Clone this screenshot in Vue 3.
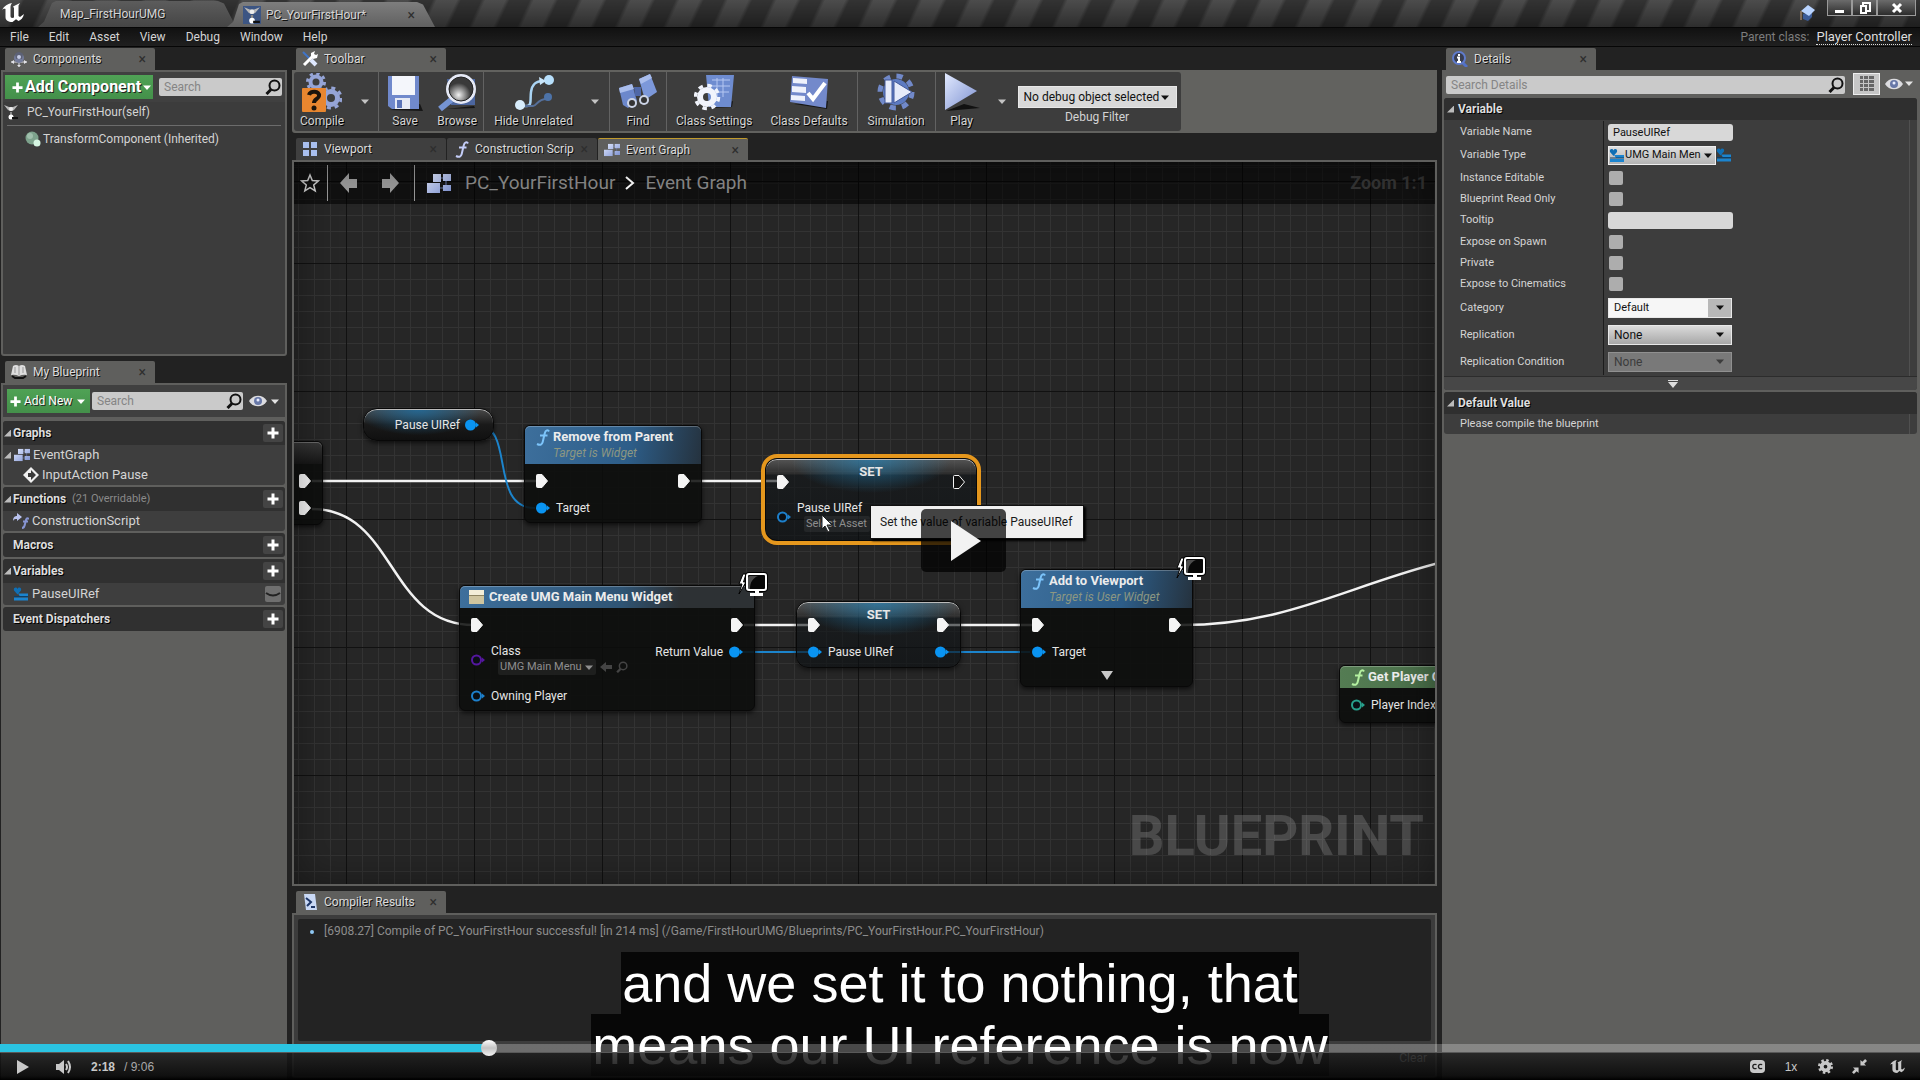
<template>
  <svg class="sprite" aria-hidden="true">
    <symbol id="caret" viewBox="0 0 8 5"><path d="M0 .5h8L4 5z" fill="currentColor" /></symbol>
    <symbol id="plus" viewBox="0 0 12 12"><path d="M4.500.5h3v4h4v3h-4v4h-3v-4h-4v-3h4z" fill="currentColor" /></symbol>
    <symbol id="search" viewBox="0 0 16 16">
      <circle cx="9.500" cy="6.500" r="5" fill="none" stroke="currentColor" stroke-width="2" />
      <path d="M6 10.500 1.500 15" stroke="currentColor" stroke-width="3" />
    </symbol>
    <symbol id="eye" viewBox="0 0 18 12">
      <path d="M0 6c4-7 14-7 18 0-4 7-14 7-18 0z" fill="#dcdce0" />
      <circle cx="9" cy="6" r="4" fill="#6878a8" /><circle cx="9" cy="5" r="1.500" fill="#e8ecff" />
    </symbol>
    <symbol id="graph" viewBox="0 0 24 19">
      <path d="M9 4h10M6 9v3M12 14h8M19 5v8" stroke="#6676a8" />
      <path d="M6 0h8v8H6zM16 0h8v7h-8zM0 9h13v10H0zM16 11h8v6h-8z" fill="url(#steel)" />
    </symbol>
    <symbol id="fn" viewBox="0 0 14 17">
      <path d="M13 2.500C12 .5 9.500.8 8.700 4.500L6.700 13C6 16 4 16.500 1 15M4 6.500h7.500" fill="none" stroke="currentColor" stroke-width="2" />
    </symbol>
    <symbol id="exec" viewBox="0 0 12 14">
      <path d="M1.500.5h4.500L11.500 7 6 13.500H1.500a1 1 0 0 1-1-1v-11a1 1 0 0 1 1-1z" fill="var(--fill, #f4f4f4)" stroke="#f4f4f4" />
    </symbol>
    <symbol id="pin" viewBox="0 0 14 12">
      <circle cx="5.500" cy="6" r="4.500" fill="var(--fill, currentColor)" stroke="currentColor" stroke-width="2" />
      <path d="M11 3.500 14 6l-3 2.500z" fill="currentColor" />
    </symbol>
    <symbol id="umg" viewBox="0 0 16 15">
      <path d="M5 7h10v3H7zM1 11h14v3H1z" fill="#1b84cf" /><path d="M1 9.500h14v1H1z" fill="#0a3f68" />
      <path d="M4.500 8 1 4c-1-3 2.500-4 3.500-1.500C5.500 0 9 1 8 4z" fill="#0f6fb5" />
    </symbol>
    <symbol id="pawn" viewBox="0 0 16 16">
      <path d="m1 1 5 2h4l5-2-4 5-2 1H7L5 6z" fill="#b9b9b9" /><circle cx="8" cy="5" r="2" fill="#eee" />
      <path d="M8 8v3" stroke="#888" stroke-width="2" /><circle cx="8" cy="13" r="2.500" fill="#fff" /><path d="M9 14h6" stroke="#111" stroke-width="2" />
    </symbol>
    <symbol id="monitor" viewBox="0 0 30 26">
      <path d="M5 2 1 12h3L1 22l7-12H5.500L8 2z" fill="#fff" stroke="#000" />
      <rect x="8" y="1" width="21" height="18" rx="3" fill="#080808" stroke="#000" stroke-width="2" />
      <path d="M12 17c0-7 3-11 8-13h-8q-2 0-2 2v11z" fill="#4c4c4c" />
      <rect x="9" y="2" width="19" height="16" rx="2" fill="none" stroke="#fff" stroke-width="2" />
      <path d="M17 19h4v2h4v3H12v-3h5z" fill="#fff" />
    </symbol>
    <symbol id="unreal" viewBox="0 0 22 19">
      <path d="M0 7C2 3 6 .8 10 0 8.800 1.500 8.500 3 8.500 4.500V13c0 2 1.500 2.500 3.500 1.500V5L11 3.500 18 0l-1.500 2.500V13l1.500 1 4-3c-1 4-3 6-5.500 7L14 16.200 10.500 19C6 19 3.500 17.500 3.500 14V6C2.500 5.300 1 6 0 7z" fill="currentColor" />
    </symbol>
    <defs>
      <linearGradient id="steel" x1="0" y1="0" x2="1" y2="1"><stop stop-color="#e2eaff" /><stop offset="1" stop-color="#7c90d0" /></linearGradient>
      <radialGradient id="glass" cx=".4" cy=".75"><stop stop-color="#f2f2f2" /><stop offset="1" stop-color="#3a3a3a" /></radialGradient>
    </defs>
  </svg>

  <main class="editor">
    <div class="titlebar">
      <svg class="logo" viewBox="0 0 22 19"><use href="#unreal" /></svg>
      <button class="app-tab">Map_FirstHourUMG</button>
      <button class="app-tab current">
        <svg class="tab-pawn"><use href="#pawn" /></svg>
        <span>PC_YourFirstHour*</span><i class="close">×</i>
      </button>
      <svg class="tutorial" viewBox="0 0 16 16">
        <path d="M4 9v5l5 2 4-4V7z" fill="#3c5c98" /><path d="m9 0 7 5-6 6-8-5z" fill="#b9d4ff" /><path d="M2 6v9" stroke="#c9a07a" />
      </svg>
      <div class="window-buttons">
        <button aria-label="Minimize"><svg viewBox="0 0 12 12"><path d="M1 9.500h9" stroke="#fff" stroke-width="3" /></svg></button>
        <button aria-label="Restore"><svg viewBox="0 0 12 12"><path d="M4 3V1h7v8H8M2 4h5v7H2z" fill="none" stroke="#fff" stroke-width="2" /></svg></button>
        <button class="wide" aria-label="Close"><svg viewBox="0 0 12 12"><path d="m2 2 8 8M10 2l-8 8" stroke="#fff" stroke-width="3" /></svg></button>
      </div>
    </div>

    <nav class="menubar">
      <button v-for="item in menu" :key="item">{{ item }}</button>
      <span class="parent-class">Parent class: <a href="#">Player Controller</a></span>
    </nav>

    <div class="columns">
      <aside class="left">
        <section class="dock components">
          <div class="tab">
            <svg class="icon16" viewBox="0 0 16 16"><path d="M0 11h16M8 10v6" stroke="#e4e4ea" /><path d="m0 11 3-2v4zM16 11l-3-2v4zM6 14h4l-2 2z" fill="#e4e4ea" /><circle cx="8" cy="7" r="5" fill="#757d9c" /><path d="M4 3q4-4 8 0l-1 5H5z" fill="#5c6176" /><circle cx="8" cy="6" r="2" fill="#c5cbe4" /></svg>
            <h2>Components</h2><button class="close" aria-label="Close">×</button>
          </div>
          <div class="panel bordered">
            <div class="bar">
              <button class="green large"><svg class="plus"><use href="#plus" /></svg>Add Component<svg class="caret"><use href="#caret" /></svg></button>
              <label class="search"><input v-model="componentSearch" placeholder="Search" aria-label="Search components" /><svg><use href="#search" /></svg></label>
            </div>
            <div class="self"><svg class="icon16"><use href="#pawn" /></svg>PC_YourFirstHour(self)</div>
            <div class="inherited">
              <svg class="icon16" viewBox="0 0 16 16"><circle cx="7" cy="7" r="6.500" fill="#7da28c" /><circle cx="5" cy="5" r="3" fill="#9fbfac" /><circle cx="12" cy="12" r="3.500" fill="#d5f5e2" /></svg>TransformComponent (Inherited)
            </div>
          </div>
        </section>

        <section class="dock blueprint">
          <div class="tab">
            <svg class="icon16" viewBox="0 0 16 16"><path d="M2 2q3-2 6 0 3-2 6 0l2 9q-4-1-8 1-4-2-8-1z" fill="#dedede" /><path d="M8 2v9M4 3v6M12 3v6" stroke="#999" /><path d="M1 12l3 2h8l3-2" fill="none" stroke="#111" stroke-width="2" /></svg>
            <h2>My Blueprint</h2><button class="close" aria-label="Close">×</button>
          </div>
          <div class="panel">
            <div class="bar">
              <button class="green"><svg class="plus"><use href="#plus" /></svg>Add New<svg class="caret"><use href="#caret" /></svg></button>
              <label class="search"><input v-model="blueprintSearch" placeholder="Search" aria-label="Search blueprint" /><svg><use href="#search" /></svg></label>
              <button class="view" aria-label="View options"><svg class="eye"><use href="#eye" /></svg><svg class="caret"><use href="#caret" /></svg></button>
            </div>
            <div v-for="group in groups" :key="group.title" class="group">
              <div class="group-head">
                <i class="fold" :class="{ none: !group.rows.length }"></i>
                <h3>{{ group.title }}</h3><small v-if="group.note">{{ group.note }}</small>
                <button :aria-label="'Add to ' + group.title"><svg class="plus"><use href="#plus" /></svg></button>
              </div>
              <div v-for="row in group.rows" :key="row.name" class="group-row" :class="row.kind">
                <i v-if="row.kind === 'graph'" class="fold"></i>
                <svg v-if="row.kind === 'graph'" class="icon16" viewBox="0 0 24 19"><use href="#graph" /></svg>
                <svg v-else-if="row.kind === 'event'" class="icon16" viewBox="0 0 16 16"><path d="m8 0 8 8-8 8-8-8z" fill="#f0f0f0" /><path d="m8 3 5 5-5 5v-3H5V6h3z" fill="#3a3a3a" /></svg>
                <svg v-else-if="row.kind === 'script'" class="icon16" viewBox="0 0 16 16"><path d="M0 8c0-4 2-5 4-5V0l5 4-5 4V6C2 6 1 6 0 8z" fill="#b9c2ee" /><path d="M16 6c-3-2-3 1-4 5-.5 3-1 4-3 4M10 8.500h5" fill="none" stroke="#8795d2" stroke-width="2" /></svg>
                <svg v-else class="icon16" viewBox="0 0 16 15"><use href="#umg" /></svg>
                <span>{{ row.name }}</span>
                <button v-if="row.kind === 'variable'" class="lid" aria-label="Toggle visibility"><svg viewBox="0 0 16 16"><path d="M1 7q7 5 14 0" fill="none" stroke="#222" stroke-width="2" /></svg></button>
              </div>
            </div>
          </div>
        </section>
      </aside>

      <section class="center">
        <div class="dock">
          <div class="tab">
            <svg class="icon16" viewBox="0 0 16 16"><path d="m1 1 8 8" stroke="#3f74c8" stroke-width="2" /><path d="m9 9 5 5" stroke="#dfe8ff" stroke-width="4" /><path d="M2 14 11 5" stroke="#fff" stroke-width="3" /><path d="M9 6V2l4-2-1 3 2 1 2-1-1 4-4 1z" fill="#fff" /></svg>
            <h2>Toolbar</h2><button class="close" aria-label="Close">×</button>
          </div>
          <div class="toolbar">
            <div class="tools">
              <div class="tool-group compile">
                <button class="tool">
                  <svg viewBox="0 0 40 40">
                    <g fill="none" stroke="#95a4d6"><circle cx="14" cy="9" r="5.500" stroke-width="4" /><circle cx="14" cy="9" r="8.500" stroke-width="3" stroke-dasharray="3.300 3.380" /><circle cx="29" cy="25" r="6.500" stroke-width="5" /><circle cx="29" cy="25" r="10" stroke-width="3" stroke-dasharray="4 3.850" /></g>
                    <rect y="15" width="24" height="24" rx="1" fill="#e8862f" />
                    <path d="M7 22c1-5 11-4 10 1-.5 3-5 3-5 7" fill="none" stroke="#1c140c" stroke-width="4" /><circle cx="12" cy="35" r="2.500" fill="#1c140c" />
                  </svg>Compile
                </button>
                <button class="drop" aria-label="Compile options"><svg class="caret"><use href="#caret" /></svg></button>
              </div>
              <div class="tool-group file">
                <button class="tool">
                  <svg viewBox="0 0 40 40"><path d="m4 37 34 1-3-7z" fill="#161616" /><path d="M3 3h31v33H7l-4-3z" fill="#7089cc" /><path d="M7 3h23v19H7z" fill="#f4f6fb" /><path d="M10 25h15v11H10z" fill="#e6eaf5" /><path d="M12 27h5v8h-5z" fill="#5b74b8" /></svg>Save
                </button>
                <button class="tool">
                  <svg viewBox="0 0 40 40"><path d="m9 36 28-3 1 2z" fill="#161616" /><path d="M10 6h28v26H14z" fill="#4c669f" /><path d="m14 27-11 9" stroke="#7594d4" stroke-width="6" /><circle cx="24" cy="16" r="15" fill="#e6eaf6" /><circle cx="24" cy="16" r="12" fill="url(#glass)" stroke="#222" /></svg>Browse
                </button>
              </div>
              <div class="tool-group hide">
                <button class="tool">
                  <svg viewBox="0 0 40 40"><path d="M6 33h7c5 0 3-7 4-14s4-11 12-11" fill="none" stroke="#a9d4f4" stroke-width="2.500" /><path d="M11 33h8c4 0 4-7 14-7" fill="none" stroke="#56709a" stroke-width="2" /><circle cx="6" cy="32" r="5" fill="#d7ecfb" /><circle cx="35" cy="7" r="5" fill="#b7dffb" /><circle cx="34" cy="24" r="4" fill="#4d73a8" /><path d="m25 4 7 4-6 4z" fill="#c8e5fa" /></svg>Hide Unrelated
                </button>
                <button class="drop" aria-label="Hide options"><svg class="caret"><use href="#caret" /></svg></button>
              </div>
              <div class="tool-group">
                <button class="tool">
                  <svg viewBox="0 0 40 40"><path d="m1 15 13-4 5 17-9 7-5-3z" fill="#6c88cc" /><path d="m21 6 11-5 7 18-12 8z" fill="#7c98da" /><path d="m1 15 13-4 2 5-14 4zM21 6l11-5 2 4-11 6z" fill="#a9bdec" /><path d="M16 14h7v9h-6z" fill="#4f68a8" /><circle cx="14" cy="30" r="5" fill="#ccd4e6" /><circle cx="26" cy="27" r="5" fill="#ccd4e6" /><circle cx="14" cy="30" r="3" fill="#333" /><circle cx="26" cy="27" r="3" fill="#333" /></svg>Find
                </button>
              </div>
              <div class="tool-group class-tools">
                <button class="tool">
                  <svg viewBox="0 0 40 40"><path d="m16 35 22-1 1-6z" fill="#161616" /><path d="M12 2h28l-3 32H15z" fill="#6e8cd0" /><path d="M18 7h18M17 13h19M16 19h19M23 5v19M29 5v19" stroke="#b5c7f2" /><circle cx="13" cy="24" r="7" fill="none" stroke="#f1f4fc" stroke-width="6" /><circle cx="13" cy="24" r="11.500" fill="none" stroke="#f1f4fc" stroke-width="3.500" stroke-dasharray="4.500 4.530" /></svg>Class Settings
                </button>
                <button class="tool">
                  <svg viewBox="0 0 40 40"><path d="m5 31 33 5 1-8z" fill="#161616" /><path d="m3 3 36 3-2 29L1 29z" fill="#7389cb" /><path d="m4 5 14 1v5L4 10zM3 13l14 1v6L3 19zM2 22l14 1v5L2 27z" fill="#eef1fc" /><path d="m19 20 5 6L36 10" fill="none" stroke="#fff" stroke-width="4" /></svg>Class Defaults
                </button>
              </div>
              <div class="tool-group simulate">
                <button class="tool">
                  <svg viewBox="0 0 40 40"><circle cx="20" cy="19" r="13" fill="#5d7bc2" /><circle cx="20" cy="19" r="16" fill="none" stroke="#7189c9" stroke-width="5" stroke-dasharray="6.280 6.280" /><path d="M9 7h7v23H9zM18 8l18 11-18 11z" fill="#e6ebfa" stroke="#42599a" /></svg>Simulation
                </button>
              </div>
              <div class="tool-group play">
                <button class="tool">
                  <svg viewBox="0 0 40 40"><path d="m4 38 34-3-16-4z" fill="#111" /><path d="M3 0v37l32-19z" fill="url(#steel)" /></svg>Play
                </button>
                <button class="drop" aria-label="Play options"><svg class="caret"><use href="#caret" /></svg></button>
              </div>
              <label class="debug">
                <span class="pick"><select v-model="debugObject"><option>No debug object selected</option></select><svg class="caret"><use href="#caret" /></svg></span>
                Debug Filter
              </label>
            </div>
          </div>
        </div>

        <div class="doc-tabs">
          <div class="tab idle">
            <svg class="icon16" viewBox="0 0 16 16"><path d="M1 1h6v6H1zM9 1h6v6H9zM1 9h6v6H1zM9 9h6v6H9z" fill="#a9bfee" /></svg><h2>Viewport</h2><button class="close" aria-label="Close">×</button>
          </div>
          <div class="tab idle script"><svg class="fn"><use href="#fn" /></svg><h2>Construction Scrip</h2><button class="close" aria-label="Close">×</button></div>
          <div class="tab active"><svg class="icon16" viewBox="0 0 24 19"><use href="#graph" /></svg><h2>Event Graph</h2><button class="close" aria-label="Close">×</button></div>
        </div>

        <div class="canvas">
          <svg class="wires">
            <g fill="none" stroke="#f2f2f2" stroke-width="2.500">
              <path d="M18 319H243M397 319H485M450 463H516M654 463H740" />
              <path d="M18 347C102 347 93 463 180 463M887 463c103 0 160-36 254-61 60-16 80-20 100-20" />
            </g>
            <g fill="none" stroke="#1c84cc" stroke-width="2">
              <path d="M183 263C222 263 194 346 241 346M447 490H516M653 490H736" />
            </g>
          </svg>

          <div class="crumbs">
            <button aria-label="Favourite"><svg class="star" viewBox="0 0 20 20"><path d="m10 2 2.300 5.600 6 .4-4.600 3.900 1.500 5.900L10 14.600l-5.200 3.200 1.500-5.900L1.700 8l6-.4z" fill="none" stroke="#d5d5d5" stroke-width="1.500" /></svg></button>
            <i class="rule"></i>
            <button class="step" aria-label="Back"><svg viewBox="0 0 18 20"><path d="M0 10 9 0v6h8v9H9v5z" fill="#9a9a9a" /></svg></button>
            <button class="step" aria-label="Forward"><svg viewBox="0 0 18 20"><path d="M18 10 9 0v6H1v9h8v5z" fill="#9a9a9a" /></svg></button>
            <i class="rule"></i>
            <svg class="graph-icon"><use href="#graph" /></svg>
            <span>PC_YourFirstHour</span>
            <svg class="chevron" viewBox="0 0 10 16"><path d="m1 2 7 6-7 6" fill="none" stroke="#fff" stroke-width="2" /></svg>
            <span>Event Graph</span>
            <b>Zoom 1:1</b>
          </div>

          <div class="node input-action">
            <div class="node-head"></div>
            <div class="pins"><svg class="exec"><use href="#exec" /></svg></div>
            <div class="pins"><svg class="exec"><use href="#exec" /></svg></div>
          </div>

          <div class="node getter"><span>Pause UIRef</span><svg class="pin"><use href="#pin" /></svg></div>

          <div class="node remove">
            <div class="node-head call"><svg class="fn"><use href="#fn" /></svg><div><strong>Remove from Parent</strong><em>Target is Widget</em></div></div>
            <div class="pins"><svg class="exec"><use href="#exec" /></svg><svg class="exec"><use href="#exec" /></svg></div>
            <div class="pins"><span class="port"><svg class="pin"><use href="#pin" /></svg>Target</span></div>
          </div>

          <div class="node create">
            <div class="node-head">
              <svg class="icon16" viewBox="0 0 16 16"><path d="M0 1h15v14H0z" fill="#cfc59f" /><path d="M0 1h15v5H0z" fill="#f3eed8" /><path d="M0 6h15v1H0z" fill="#8d8461" /></svg>
              <strong>Create UMG Main Menu Widget</strong>
            </div>
            <div class="pins"><svg class="exec"><use href="#exec" /></svg><svg class="exec"><use href="#exec" /></svg></div>
            <div class="pins tall">
              <span class="port"><svg class="pin hollow violet"><use href="#pin" /></svg>
                <span class="stack">Class
                  <span class="asset"><button class="field">UMG Main Menu<svg class="caret"><use href="#caret" /></svg></button>
                    <svg class="mini" viewBox="0 0 12 12"><path d="m0 6 6-5v3h6v4H6v3z" fill="#444" /></svg>
                    <svg class="mini dim"><use href="#search" /></svg></span>
                </span>
              </span>
              <span class="port out">Return Value<svg class="pin"><use href="#pin" /></svg></span>
            </div>
            <div class="pins"><span class="port"><svg class="pin hollow"><use href="#pin" /></svg>Owning Player</span></div>
            <svg class="badge"><use href="#monitor" /></svg>
          </div>

          <div class="node setter selected">
            <strong class="set">SET</strong>
            <div class="pins"><svg class="exec"><use href="#exec" /></svg><svg class="exec hollow-exec"><use href="#exec" /></svg></div>
            <div class="pins tall"><span class="port"><svg class="pin hollow"><use href="#pin" /></svg><span class="stack">Pause UIRef<span class="asset"><button class="field">Select Asset</button></span></span></span></div>
          </div>

          <div class="node setter second">
            <strong class="set">SET</strong>
            <div class="pins"><svg class="exec"><use href="#exec" /></svg><svg class="exec"><use href="#exec" /></svg></div>
            <div class="pins"><span class="port"><svg class="pin"><use href="#pin" /></svg>Pause UIRef</span><svg class="pin"><use href="#pin" /></svg></div>
          </div>

          <div class="node viewport">
            <div class="node-head call"><svg class="fn"><use href="#fn" /></svg><div><strong>Add to Viewport</strong><em>Target is User Widget</em></div></div>
            <div class="pins"><svg class="exec"><use href="#exec" /></svg><svg class="exec"><use href="#exec" /></svg></div>
            <div class="pins"><span class="port"><svg class="pin"><use href="#pin" /></svg>Target</span></div>
            <button class="more" aria-label="Show advanced pins"><svg viewBox="0 0 12 9"><path d="M0 0h12L6 9z" fill="#c8c8c8" /></svg></button>
            <svg class="badge"><use href="#monitor" /></svg>
          </div>

          <div class="node player">
            <div class="node-head pure"><svg class="fn"><use href="#fn" /></svg><strong>Get Player Controller</strong></div>
            <div class="pins"><span class="port"><svg class="pin hollow teal"><use href="#pin" /></svg>Player Index</span></div>
          </div>

          <div class="watermark">BLUEPRINT</div>
          <div class="tooltip" role="tooltip">Set the value of variable PauseUIRef</div>
          <svg class="cursor" viewBox="0 0 12 19"><path d="M1 1v14l3-3 3 6 2-1-3-6h5z" fill="#fff" stroke="#222" /></svg>
        </div>

        <div class="dock compiler">
          <div class="tab">
            <svg class="icon16" viewBox="0 0 16 16"><path d="M2 0h11l2 16H4z" fill="#c9d9f6" /><path d="m4 4 5 4-4 4M9 13h4" fill="none" stroke="#1d3668" stroke-width="2" /></svg>
            <h2>Compiler Results</h2><button class="close" aria-label="Close">×</button>
          </div>
          <div class="panel bordered">
            <ul class="log"><li>[6908.27] Compile of PC_YourFirstHour successful! [in 214 ms] (/Game/FirstHourUMG/Blueprints/PC_YourFirstHour.PC_YourFirstHour)</li></ul>
            <button class="clear">Clear</button>
          </div>
        </div>
      </section>

      <aside class="dock details">
        <div class="tab">
          <svg class="icon16" viewBox="0 0 16 16"><path d="m11 12 4 4" stroke="#5271c8" stroke-width="3" /><circle cx="7" cy="7" r="6" fill="#393e50" stroke="#5f7bcc" stroke-width="2" /><path d="M7 3v2M5 6.500h2V11M5 11h4" fill="none" stroke="#fff" stroke-width="2" /></svg>
          <h2>Details</h2><button class="close" aria-label="Close">×</button>
        </div>
        <div class="panel">
          <div class="details-bar">
            <label class="search"><input v-model="detailSearch" placeholder="Search Details" aria-label="Search details" /><svg><use href="#search" /></svg></label>
            <button class="matrix" aria-label="Property matrix"><svg viewBox="0 0 14 15"><path d="M0 1.500h14M0 5.500h14M0 9.500h14M0 13.500h14" stroke="#666" stroke-width="3" stroke-dasharray="3 1 4 1 5" /></svg></button>
            <button class="view" aria-label="View options"><svg class="eye"><use href="#eye" /></svg><svg class="caret"><use href="#caret" /></svg></button>
          </div>

          <div class="category">
            <div class="category-head"><i class="fold"></i><h3>Variable</h3></div>
            <div class="props">
              <div v-for="prop in props" :key="prop.id" class="prop" :class="prop.type">
                <label :for="prop.id">{{ prop.label }}</label>
                <div class="value">
                  <input v-if="prop.type === 'text'" :id="prop.id" v-model="prop.value" type="text" />
                  <input v-else-if="prop.type === 'check'" :id="prop.id" v-model="prop.value" type="checkbox" />
                  <template v-else-if="prop.type === 'kind'">
                    <button :id="prop.id" class="kind-button"><svg><use href="#umg" /></svg><span>{{ prop.value }}</span><svg class="caret"><use href="#caret" /></svg></button>
                    <svg class="icon16"><use href="#umg" /></svg>
                  </template>
                  <span v-else class="pick" :class="{ combo: prop.id === 'category', disabled: prop.disabled }">
                    <select :id="prop.id" v-model="prop.value" :disabled="prop.disabled"><option>{{ prop.value }}</option></select>
                    <svg class="caret"><use href="#caret" /></svg>
                  </span>
                </div>
              </div>
            </div>
            <button class="expander" aria-label="Show advanced"><svg viewBox="0 0 10 8"><path d="M0 0h10v1H0zM0 2h10L5 8z" fill="#ddd" /></svg></button>
          </div>

          <div class="category">
            <div class="category-head"><i class="fold"></i><h3>Default Value</h3></div>
            <p>Please compile the blueprint</p>
          </div>
        </div>
      </aside>
    </div>

    <button class="big-play" aria-label="Play video"><svg viewBox="0 0 30 40"><path d="M0 0v40l30-20z" fill="#f2f2f2" /></svg></button>

    <div class="captions"><p>and we set it to nothing, that</p><p>means our UI reference is now</p></div>

    <div class="player-bar">
      <input v-model.number="seconds" class="progress" :style="{ '--played': played }" type="range" min="0" :max="duration" aria-label="Seek" />
      <div class="controls">
        <button class="play-button" aria-label="Play"><svg viewBox="0 0 12 14"><path d="M0 0v14l12-7z" fill="currentColor" /></svg></button>
        <button class="volume" aria-label="Volume"><svg viewBox="0 0 16 14"><path d="M0 4h3l5-4v14l-5-4H0z" fill="currentColor" /><path d="M10 4q2 3 0 6M12 1q4 6 0 12" fill="none" stroke="currentColor" stroke-width="2" /></svg></button>
        <b>{{ clock(seconds) }}</b><span class="total">/ {{ clock(duration) }}</span>
        <div class="right-controls">
          <button aria-label="Captions"><svg viewBox="0 0 16 14"><rect width="16" height="14" rx="4" fill="currentColor" /><path d="M7 5q-4-1-4 2t4 2M13 5q-4-1-4 2t4 2" fill="none" stroke="#222" stroke-width="1.500" /></svg></button>
          <button>1x</button>
          <button aria-label="Settings"><svg viewBox="0 0 16 16"><circle cx="8" cy="8" r="4" fill="none" stroke="currentColor" stroke-width="4" /><circle cx="8" cy="8" r="6.500" fill="none" stroke="currentColor" stroke-width="3" stroke-dasharray="2.550 2.550" /></svg></button>
          <button aria-label="Exit fullscreen"><svg viewBox="0 0 16 16"><path d="M9 7V1l2 2 3-3 2 2-3 3 2 2zM7 9v6l-2-2-3 3-2-2 3-3-2-2z" fill="currentColor" /></svg></button>
          <button class="brand" aria-label="Unreal Engine"><svg viewBox="0 0 22 19"><use href="#unreal" /></svg></button>
        </div>
      </div>
    </div>
  </main>
</template>

<script setup>
import { ref, reactive, computed } from 'vue';

const menu = ['File', 'Edit', 'Asset', 'View', 'Debug', 'Window', 'Help'];

const componentSearch = ref('');
const blueprintSearch = ref('');
const detailSearch = ref('');
const debugObject = ref('No debug object selected');

const groups = [
  { title: 'Graphs', rows: [{ name: 'EventGraph', kind: 'graph' }, { name: 'InputAction Pause', kind: 'event' }] },
  { title: 'Functions', note: '(21 Overridable)', rows: [{ name: 'ConstructionScript', kind: 'script' }] },
  { title: 'Macros', rows: [] },
  { title: 'Variables', rows: [{ name: 'PauseUIRef', kind: 'variable' }] },
  { title: 'Event Dispatchers', rows: [] },
];

const props = reactive([
  { id: 'name', label: 'Variable Name', type: 'text', value: 'PauseUIRef' },
  { id: 'kind', label: 'Variable Type', type: 'kind', value: 'UMG Main Men' },
  { id: 'editable', label: 'Instance Editable', type: 'check', value: false },
  { id: 'readonly', label: 'Blueprint Read Only', type: 'check', value: false },
  { id: 'tooltip', label: 'Tooltip', type: 'text', value: '' },
  { id: 'spawn', label: 'Expose on Spawn', type: 'check', value: false },
  { id: 'private', label: 'Private', type: 'check', value: false },
  { id: 'cinematics', label: 'Expose to Cinematics', type: 'check', value: false },
  { id: 'category', label: 'Category', type: 'choice', value: 'Default' },
  { id: 'replication', label: 'Replication', type: 'choice', value: 'None' },
  { id: 'condition', label: 'Replication Condition', type: 'choice', value: 'None', disabled: true },
]);

const duration = 546;
const seconds = ref(138);
const played = computed(() => (seconds.value / duration) * 100 + '%');

const clock = (s) => Math.floor(s / 60) + ':' + String(s % 60).padStart(2, '0');
</script>

<style>
body {
  margin: 0;
  background: #222;
}
</style>

<style scoped>
* {
  box-sizing: border-box;
}

.editor {
  position: relative;
  display: flex;
  flex-direction: column;
  height: 100vh;
  overflow: hidden;
  background: #222;
  color: #d4d4d4;
  font: 12px/16px Roboto, "Noto Sans", sans-serif;
}

.sprite {
  position: absolute;
  width: 0;
  height: 0;
}

button {
  display: flex;
  align-items: center;
  padding: 0;
  border: 0;
  background: none;
  color: inherit;
  font: inherit;
}

input, select {
  margin: 0;
  border: 0;
  font: inherit;
  outline: none;
}

svg {
  display: block;
  flex: none;
}

h2, h3, p, ul {
  margin: 0;
  font-size: 12px;
}

.icon16 {
  width: 16px;
  height: 16px;
}

.caret {
  width: 8px;
  height: 5px;
}

.plus {
  width: 12px;
  height: 12px;
}

.fn {
  width: 14px;
  height: 17px;
}

.close {
  color: #2e2e2e;
  font: 14px/16px Roboto, sans-serif;
}

/* title and menu */
.titlebar {
  display: flex;
  align-items: flex-end;
  height: 27px;
  flex: none;
  background:
    linear-gradient(#fff0, #0006),
    repeating-linear-gradient(115deg, #4c4c4c 0 18px, #333 22px 40px, #4c4c4c 44px);
}

.logo {
  width: 22px;
  height: 19px;
  margin: 0 14px 5px 2px;
  color: #fff;
}

.app-tab {
  width: 198px;
  height: 26px;
  padding: 0 22px;
  clip-path: polygon(0 100%, 6px 80%, 14px 8%, 18px 0, 180px 0, 186px 10%, 198px 100%);
  background: linear-gradient(#5c5c5c, #454545);
  text-shadow: 1px 1px 0 #111;
}

.app-tab.current {
  width: 208px;
  height: 25px;
  margin-left: -9px;
  padding: 0 20px 0 16px;
  gap: 5px;
  clip-path: polygon(0 100%, 6px 80%, 12px 8%, 16px 0, 190px 0, 196px 10%, 208px 100%);
  background: linear-gradient(#7e7e7e, #606060);
}

.tab-pawn {
  width: 18px;
  height: 18px;
  background: #3c5583;
}

.app-tab .close {
  margin-left: auto;
  text-shadow: none;
}

.tutorial {
  width: 16px;
  height: 16px;
  margin: 0 12px 6px auto;
}

.window-buttons {
  display: flex;
  align-self: flex-start;
  margin-right: 4px;
}

.window-buttons button {
  width: 25px;
  height: 16px;
  justify-content: center;
  border: 1px solid #9a9a9a;
  border-top: 0;
  background: linear-gradient(#6b6b6b, #2c2c2c);
}

.window-buttons .wide {
  width: 39px;
}

.window-buttons svg {
  width: 12px;
  height: 12px;
}

.menubar {
  display: flex;
  align-items: center;
  flex: none;
  gap: 20px;
  height: 20px;
  padding: 0 8px 0 10px;
  border: solid #060606;
  border-width: 1px 0;
  background: linear-gradient(#111, #202020);
}

.parent-class {
  margin-left: auto;
  color: #7d7d7d;
}

.parent-class a {
  margin-left: 4px;
  border-bottom: 1px dotted #ddd;
  color: #dedede;
  font-size: 13px;
  line-height: 14px;
  text-decoration: none;
}

.columns {
  display: grid;
  grid-template-columns: 286px minmax(0, 1fr) 478px;
  gap: 5px;
  flex: 1;
  min-height: 0;
  padding: 1px 0 0 1px;
}

.left, .center, .dock {
  display: flex;
  flex-direction: column;
  min-height: 0;
}

.left {
  gap: 5px;
}

/* docked tabs */
.tab {
  display: flex;
  align-items: center;
  flex: none;
  gap: 6px;
  width: 150px;
  height: 22px;
  margin-left: 4px;
  padding: 0 9px 0 6px;
  border-radius: 2px 2px 0 0;
  background: #5f5f5d;
}

.tab h2 {
  flex: 1;
  color: #dcdcdc;
  font-weight: 400;
  white-space: nowrap;
  text-shadow: 1px 1px 0 #111;
}

.panel {
  flex: 1;
  min-height: 0;
  padding: 2px;
  background: #5f5f5d;
}

.panel.bordered {
  border: 2px solid #5f5f5d;
  border-radius: 0 0 3px 3px;
  padding: 0;
  background: #3c3c3c;
}

.components {
  height: 308px;
}

.blueprint {
  flex: 1;
}

.bar {
  display: flex;
  align-items: center;
  gap: 2px;
  height: 32px;
  padding: 0 6px 0 4px;
  background: #404040;
}

.components .bar {
  gap: 6px;
  height: 30px;
  padding: 0 3px 0 2px;
}

.green {
  height: 24px;
  gap: 3px;
  padding: 0 5px 0 3px;
  background: linear-gradient(#4fa255, #44904a);
  color: #fff;
  text-shadow: 1px 1px 0 #222;
}

.green.large {
  width: 148px;
  gap: 2px;
  padding: 0 7px;
  font-size: 16px;
  font-weight: 700;
  white-space: nowrap;
}

.green .plus {
  width: 11px;
  height: 11px;
}

.green .caret {
  margin-left: auto;
}

.blueprint .green {
  width: 83px;
}

.search {
  display: flex;
  align-items: center;
  flex: 1;
  min-width: 0;
  height: 18px;
  padding-right: 1px;
  border-radius: 2px;
  background: #cacaca;
  color: #111;
}

.search input {
  flex: 1;
  min-width: 0;
  padding: 0 5px;
  background: none;
}

.search input::placeholder {
  color: #858585;
}

.search svg {
  width: 16px;
  height: 16px;
}

.view {
  gap: 4px;
  padding-left: 4px;
  color: #e4e4e4;
}

.eye {
  width: 18px;
  height: 12px;
}

.self {
  display: flex;
  align-items: center;
  gap: 8px;
  height: 24px;
  margin: 0 4px;
  border-bottom: 1px solid #6c6c6c;
  padding-bottom: 4px;
}

.self .icon16 {
  margin-left: -4px;
}

.inherited {
  display: flex;
  align-items: center;
  gap: 2px;
  height: 26px;
  padding-left: 22px;
}

.blueprint .bar {
  margin-bottom: 4px;
}

.group {
  margin-bottom: 2px;
  border-radius: 3px;
  overflow: hidden;
  background: #3e3e3e;
}

.group-head {
  display: flex;
  align-items: center;
  gap: 2px;
  height: 24px;
  padding: 0 2px 0 1px;
  background: #303030;
}

h3 {
  color: #dedede;
  font-weight: 700;
  text-shadow: 1px 1px 0 #000;
}

.group-head small {
  margin-left: 4px;
  color: #8a8a8a;
  font-size: 11px;
}

.group-head button {
  width: 20px;
  height: 18px;
  margin-left: auto;
  justify-content: center;
  border-radius: 2px;
  background: #444;
  color: #fff;
}

.fold {
  width: 7px;
  height: 7px;
  clip-path: polygon(100% 0, 100% 100%, 0 100%);
  background: #bcbcbc;
}

.fold.none {
  visibility: hidden;
}

.group-row {
  display: flex;
  align-items: center;
  gap: 3px;
  height: 20px;
  padding: 0 4px 0 10px;
  font-size: 13px;
}

.group-row.graph {
  padding-left: 1px;
}

.group-row.event {
  padding-left: 20px;
}

.group-row.variable {
  height: 22px;
}

.lid {
  width: 16px;
  height: 16px;
  margin-left: auto;
  border-radius: 2px;
  background: #6f6f6f;
}

/* toolbar */
.toolbar {
  display: flex;
  height: 63px;
  padding: 2px;
  border-radius: 0 0 3px 3px;
  background: #62625f;
}

.tools {
  display: flex;
  border-radius: 3px;
  background: #3d3d3d;
}

.tool-group {
  display: flex;
  border-right: 1px solid #626262;
}

.tool {
  flex-direction: column;
  justify-content: flex-start;
  padding: 1px 8px 0;
  white-space: nowrap;
  text-shadow: 1px 1px 0 #000;
}

.tool svg {
  width: 40px;
  height: 40px;
}

.compile .tool {
  padding-left: 6px;
}

.file .tool {
  padding: 1px 6px 0;
}

.hide .tool {
  padding-left: 10px;
}

.class-tools .tool {
  padding: 1px 9px 0;
}

.simulate .tool {
  padding: 1px 10px 0;
}

.tool-group.play {
  border: 0;
}

.play .tool {
  padding: 1px 6px 0;
}

.drop {
  width: 28px;
  justify-content: center;
  color: #c4c4c4;
}

.compile .drop {
  width: 26px;
}

.debug {
  display: flex;
  flex-direction: column;
  align-items: center;
  justify-content: center;
  gap: 1px;
  padding: 8px 4px 0 2px;
}

.pick {
  position: relative;
  display: flex;
  align-items: center;
  color: #111;
}

.pick select {
  width: 124px;
  height: 20px;
  padding: 0 20px 0 5px;
  appearance: none;
  border: 1px solid #e8e8e8;
  border-radius: 0;
  background: linear-gradient(#dadada, #a8a8a8);
  color: #111;
}

.pick .caret {
  position: absolute;
  right: 8px;
  pointer-events: none;
}

.debug .pick select {
  width: 159px;
  height: 22px;
  padding-right: 12px;
  background: #d9d9d9;
}

/* graph */
.doc-tabs {
  display: flex;
  gap: 1px;
  margin-top: 5px;
  padding-left: 4px;
}

.doc-tabs .tab {
  margin: 0;
}

.tab.idle {
  background: #3f3f3f;
}

.tab.script {
  padding-left: 8px;
  color: #c4cdf8;
}

.tab.active {
  border-top: 1px solid #c09a2c;
}

.canvas {
  position: relative;
  flex: 1;
  min-height: 0;
  overflow: hidden;
  border: 2px solid #5f5f5d;
  background:
    repeating-linear-gradient(90deg, #111 0 1px, #fff0 1px 128px) 52px 0,
    repeating-linear-gradient(#111 0 1px, #fff0 1px 128px) 0 101px,
    repeating-linear-gradient(90deg, #333 0 1px, #fff0 1px 16px) 4px 0,
    repeating-linear-gradient(#333 0 1px, #fff0 1px 16px) 0 5px,
    #262626;
}

.canvas::after {
  content: "";
  position: absolute;
  inset: 0;
  box-shadow: inset 0 0 40px #0006;
  pointer-events: none;
}

.wires {
  position: absolute;
  width: 100%;
  height: 100%;
}

.crumbs {
  position: relative;
  display: flex;
  align-items: center;
  height: 42px;
  padding: 0 8px 0 6px;
  background: #0000008c;
  color: #8a8a8a;
  font-size: 19px;
}

.star {
  width: 20px;
  height: 20px;
}

.rule {
  width: 1px;
  height: 36px;
  margin: 0 12px 0 7px;
  background: #999;
}

.step svg {
  width: 18px;
  height: 22px;
}

.step + .step {
  margin: 0 8px 0 23px;
}

.graph-icon {
  width: 24px;
  height: 19px;
  margin-right: 14px;
}

.chevron {
  width: 10px;
  height: 16px;
  margin: 0 10px;
}

.crumbs b {
  margin-left: auto;
  color: #343434;
  font-size: 18px;
}

.node {
  position: absolute;
  border: 1px solid #080808;
  border-radius: 6px;
  background: #0b0d0bdd;
  box-shadow: 0 2px 5px #000a;
  color: #e6e6e6;
}

.input-action {
  left: -60px;
  top: 279px;
  width: 89px;
  height: 84px;
}

.input-action .node-head {
  background: linear-gradient(#373737, #161616);
}

.input-action .pins {
  justify-content: flex-end;
}

.getter {
  left: 69px;
  top: 246px;
  display: flex;
  align-items: center;
  justify-content: flex-end;
  gap: 5px;
  width: 131px;
  height: 33px;
  padding-right: 14px;
  border-radius: 14px;
  background: radial-gradient(ellipse at 42% 0, #1d70a5cc, #1d70a500 60%), linear-gradient(#4a4a4a, #1a1a1a 50%, #101010);
  box-shadow: inset 0 1px 0 #bbb, 0 2px 5px #000a;
}

.remove {
  left: 230px;
  top: 263px;
  width: 178px;
  height: 98px;
}

.create {
  left: 165px;
  top: 423px;
  width: 296px;
  height: 126px;
}

.viewport {
  left: 726px;
  top: 407px;
  width: 173px;
  height: 118px;
}

.player {
  left: 1045px;
  top: 503px;
  width: 200px;
  height: 58px;
}

.setter {
  padding-top: 9px;
  border-radius: 12px;
  background:
    radial-gradient(ellipse 80px 34px at 50% 0, #2483b8b0, #2483b800),
    linear-gradient(#6c6c6caa, #2f2f2faa 15px, #11151899 16px, #0b0f12a0);
  box-shadow: inset 0 1px 0 #bbb, 0 2px 5px #0008;
}

.setter.selected {
  left: 471px;
  top: 296px;
  width: 212px;
  height: 83px;
  outline: 4px solid #e5971d;
}

.setter.second {
  left: 502px;
  top: 439px;
  width: 165px;
  height: 67px;
}

.set {
  position: absolute;
  top: 5px;
  width: 100%;
  font-size: 13px;
  text-align: center;
}

.node-head {
  display: flex;
  align-items: center;
  gap: 4px;
  height: 22px;
  padding: 0 9px;
  border-radius: 5px 5px 0 0;
  background: linear-gradient(90deg, #3d6f9c, #2f5474 55%, #2d3134 75%);
  box-shadow: inset 0 1px 0 #ffffff40;
  white-space: nowrap;
}

.node-head.call {
  height: 38px;
  gap: 3px;
  padding-left: 11px;
  background: linear-gradient(100deg, #3d6f9c, #2d5d88 60%, #25323e);
}

.node-head.call .fn {
  align-self: flex-start;
  margin-top: 3px;
  color: #7cc4fa;
}

.node-head.pure {
  gap: 3px;
  padding-left: 11px;
  background: linear-gradient(90deg, #547c53, #3f6240);
}

.pure .fn {
  color: #b4f0a0;
}

.node-head strong {
  display: block;
  color: #ececec;
  font-size: 13px;
}

.node-head em {
  display: block;
  color: #8c9782;
}

.node-head + .pins {
  margin-top: 3px;
}

.pins {
  display: flex;
  align-items: center;
  justify-content: space-between;
  height: 27px;
  padding: 0 11px;
}

.pins.tall {
  height: 44px;
  align-items: flex-start;
}

.exec {
  width: 12px;
  height: 14px;
}

.hollow-exec {
  --fill: #111;
}

.pin {
  width: 14px;
  height: 12px;
  color: #0a94f2;
}

.pin.hollow {
  --fill: #0a0f14;
  color: #1d80cc;
}

.pin.violet {
  color: #5517a0;
}

.pin.teal {
  color: #28a08c;
}

.port {
  display: flex;
  align-items: center;
  gap: 6px;
  white-space: nowrap;
}

.tall .port {
  height: 44px;
}

.tall .out {
  height: 27px;
}

.stack {
  padding-bottom: 2px;
}

.asset {
  display: flex;
  align-items: center;
  gap: 4px;
  padding-left: 7px;
}

.field {
  gap: 3px;
  height: 16px;
  padding: 0 3px 0 2px;
  border-radius: 2px;
  background: #ffffff10;
  color: #8e8e8e;
  font-size: 11px;
}

.mini {
  width: 12px;
  height: 12px;
}

.mini.dim {
  color: #444;
}

.badge {
  position: absolute;
  top: -14px;
  right: -14px;
  width: 30px;
  height: 26px;
}

.more {
  margin: 6px auto 0;
}

.more svg {
  width: 12px;
  height: 9px;
}

.watermark {
  position: absolute;
  right: 11px;
  bottom: 15px;
  color: #ffffff2b;
  font: 700 56px/66px Roboto, sans-serif;
}

.tooltip {
  position: absolute;
  left: 576px;
  top: 343px;
  padding: 8px 11px 8px 9px;
  border: 1px solid #111;
  background: #f0f0f0;
  box-shadow: 2px 2px 2px #000;
  color: #1a1a1a;
  white-space: nowrap;
}

.cursor {
  position: absolute;
  left: 527px;
  top: 352px;
  width: 12px;
  height: 19px;
}

/* compiler */
.compiler {
  height: 187px;
  margin: 5px 0 2px;
  flex: none;
}

.compiler .panel {
  display: flex;
  flex-direction: column;
  padding: 4px;
}

.log {
  height: 122px;
  padding: 4px 0 0 26px;
  border-radius: 2px;
  background: #232323;
  color: #8d8d8d;
}

.log li::marker {
  color: #8fc8f4;
}

.clear {
  margin: 9px 4px 0 auto;
  color: #bbb;
}

/* details */
.details .panel {
  padding: 3px 3px 0 2px;
}

.details-bar {
  display: flex;
  align-items: center;
  gap: 5px;
  height: 25px;
  padding: 0 4px 4px 2px;
}

.details-bar .search {
  margin-top: 2px;
}

.matrix {
  width: 27px;
  height: 22px;
  margin-left: 3px;
  justify-content: center;
  border: 1px solid #eee;
  background: #c6c6c6;
}

.matrix svg {
  width: 14px;
  height: 15px;
}

.details-bar .view {
  gap: 2px;
  padding: 0;
}

.category {
  margin-bottom: 2px;
  border-radius: 3px;
  overflow: hidden;
  background: linear-gradient(#505050, #505050) calc(100% - 7px) 0 / 1px 100% no-repeat #3d3d3d;
}

.category-head {
  display: flex;
  align-items: center;
  gap: 4px;
  height: 22px;
  padding-left: 3px;
  background: #2f2f2f;
}

.props {
  padding: 1px 0;
  border-bottom: 1px solid #2c2c2c;
}

.prop {
  display: grid;
  grid-template-columns: 160px 1fr;
  align-items: stretch;
  height: 22px;
  font-size: 11px;
}

.prop label {
  padding-left: 16px;
  border-right: 1px solid #1c1c1c;
  align-content: center;
}

.prop.check {
  height: 21px;
}

.prop.kind {
  height: 24px;
}

.prop.choice {
  height: 27px;
}

.value {
  display: flex;
  align-items: center;
  padding-left: 4px;
}

.value input[type="text"] {
  width: 125px;
  height: 17px;
  padding: 0 5px;
  border-radius: 3px;
  background: #d8d8d8;
  color: #111;
}

.value input[type="checkbox"] {
  width: 14px;
  height: 14px;
  margin-left: 1px;
  appearance: none;
  border-radius: 2px;
  background: #adadad;
}

.value .pick {
  font-size: 12px;
}

.value .combo select {
  background: linear-gradient(90deg, #f6f6f6 99px, #b8b8b8 99px);
  font-size: 11px;
}

.value .disabled select {
  border-color: #909090;
  background: #797979;
  color: #3c3c3c;
  opacity: 1;
}

.value .disabled .caret {
  color: #3c3c3c;
}

.kind-button {
  width: 108px;
  height: 19px;
  padding-right: 3px;
  border: 1px solid #eee;
  background: linear-gradient(#dedede, #b4b4b4);
  color: #111;
}

.kind-button span {
  flex: 1;
  text-align: left;
  white-space: nowrap;
}

.kind-button svg:first-child {
  width: 16px;
  height: 15px;
}

.expander {
  width: 100%;
  height: 13px;
  padding-right: 16px;
  justify-content: center;
  background: #474747;
}

.expander svg {
  width: 10px;
  height: 8px;
}

.category p {
  height: 20px;
  padding: 2px 16px;
  font-size: 11px;
}

/* video overlay */
.big-play {
  position: absolute;
  left: 50%;
  top: 50%;
  width: 85px;
  height: 63px;
  margin: -31px 0 0 -39px;
  padding-left: 4px;
  justify-content: center;
  border-radius: 5px;
  background: #000000b8;
}

.big-play svg {
  width: 30px;
  height: 40px;
}

.captions {
  position: absolute;
  right: 0;
  bottom: 4px;
  left: 0;
  display: flex;
  flex-direction: column;
  align-items: center;
  pointer-events: none;
}

.captions p {
  padding: 0 1px;
  background: #000000cc;
  color: #fff;
  font: 54px/62px "Liberation Sans", Arial, sans-serif;
  white-space: nowrap;
}

.player-bar {
  position: absolute;
  right: 0;
  bottom: 0;
  left: 0;
}

.progress {
  display: block;
  width: 100%;
  height: 8px;
  appearance: none;
  background: linear-gradient(90deg, #2bc4e2 var(--played), #ffffff40 var(--played));
}

.progress::-webkit-slider-thumb {
  width: 16px;
  height: 16px;
  appearance: none;
  border-radius: 50%;
  background: linear-gradient(#fff, #c4c4c4 50%, #f4f4f4);
}

.controls {
  display: flex;
  align-items: center;
  height: 28px;
  padding: 0 15px 0 17px;
  border-top: 1px solid #595959;
  background: linear-gradient(#1c1c1cd0, #080808e8 85%, #000);
  color: #c8c8c8;
  font: 12px/16px "Liberation Sans", Arial, sans-serif;
}

.play-button svg {
  width: 12px;
  height: 14px;
}

.volume {
  margin: 0 19px 0 27px;
}

.volume svg {
  width: 16px;
  height: 14px;
}

.total {
  margin-left: 9px;
  color: #a8a8a8;
}

.right-controls {
  display: flex;
  align-items: center;
  gap: 18px;
  margin-left: auto;
}

.right-controls button {
  width: 16px;
  justify-content: center;
}

.right-controls .brand {
  margin-left: 4px;
}

.right-controls svg {
  width: 15px;
  height: 15px;
}
</style>
